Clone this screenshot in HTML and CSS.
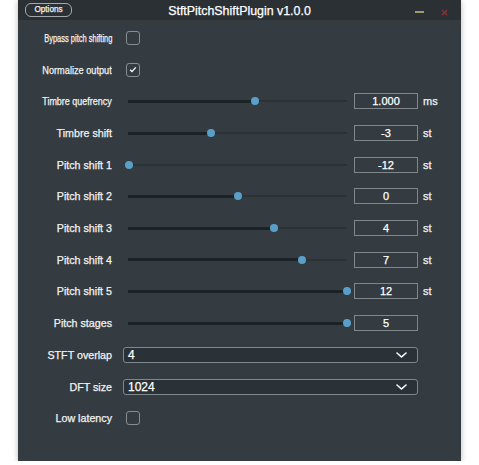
FILE: index.html
```html
<!DOCTYPE html>
<html>
<head>
<meta charset="utf-8">
<link rel="stylesheet" href="styles.css">
</head>
<body>
<div class="window">
  <div class="titlebar">
    <div class="tb-left"><span class="options">Options</span></div>
    <div class="title">StftPitchShiftPlugin v1.0.0</div>
    <div class="tb-right">
      <svg class="tb-min" width="9" height="4" viewBox="0 0 9 4"><line x1="0" y1="2" x2="9" y2="2" stroke="#9c9c6a" stroke-width="2"/></svg>
      <svg class="tb-close" width="7" height="7" viewBox="0 0 7 7"><path d="M1 1L6 6M6 1L1 6" stroke="#8e2e30" stroke-width="1.6"/></svg>
    </div>
  </div>
  <div class="content">
    <div class="row">
      <div class="label"><span class="fit fit-bypass">Bypass pitch shifting</span></div>
      <span class="checkbox"></span>
    </div>
    <div class="row">
      <div class="label"><span class="fit fit-normalize">Normalize output</span></div>
      <span class="checkbox"><svg width="8" height="7" viewBox="0 0 8 7"><path d="M1.2 3.8L3 5.6L6.8 1.4" fill="none" stroke="#ffffff" stroke-width="1.4"/></svg></span>
    </div>
    <div class="row">
      <div class="label"><span class="fit fit-quef">Timbre quefrency</span></div>
      <div class="slider"><div class="track"><div class="fill" style="width:57.8%"></div><div class="thumb" style="left:57.8%"></div></div></div>
      <div class="valuebox">1.000</div><span class="unit">ms</span>
    </div>
    <div class="row">
      <div class="label"><span class="fit">Timbre shift</span></div>
      <div class="slider"><div class="track"><div class="fill" style="width:37.5%"></div><div class="thumb" style="left:37.5%"></div></div></div>
      <div class="valuebox">-3</div><span class="unit">st</span>
    </div>
    <div class="row">
      <div class="label"><span class="fit">Pitch shift 1</span></div>
      <div class="slider"><div class="track"><div class="fill" style="width:0%"></div><div class="thumb" style="left:0%"></div></div></div>
      <div class="valuebox">-12</div><span class="unit">st</span>
    </div>
    <div class="row">
      <div class="label"><span class="fit">Pitch shift 2</span></div>
      <div class="slider"><div class="track"><div class="fill" style="width:50%"></div><div class="thumb" style="left:50%"></div></div></div>
      <div class="valuebox">0</div><span class="unit">st</span>
    </div>
    <div class="row">
      <div class="label"><span class="fit">Pitch shift 3</span></div>
      <div class="slider"><div class="track"><div class="fill" style="width:66.67%"></div><div class="thumb" style="left:66.67%"></div></div></div>
      <div class="valuebox">4</div><span class="unit">st</span>
    </div>
    <div class="row">
      <div class="label"><span class="fit">Pitch shift 4</span></div>
      <div class="slider"><div class="track"><div class="fill" style="width:79.17%"></div><div class="thumb" style="left:79.17%"></div></div></div>
      <div class="valuebox">7</div><span class="unit">st</span>
    </div>
    <div class="row">
      <div class="label"><span class="fit">Pitch shift 5</span></div>
      <div class="slider"><div class="track"><div class="fill" style="width:100%"></div><div class="thumb" style="left:100%"></div></div></div>
      <div class="valuebox">12</div><span class="unit">st</span>
    </div>
    <div class="row">
      <div class="label"><span class="fit">Pitch stages</span></div>
      <div class="slider"><div class="track"><div class="fill" style="width:100%"></div><div class="thumb" style="left:100%"></div></div></div>
      <div class="valuebox">5</div>
    </div>
    <div class="row">
      <div class="label"><span class="fit">STFT overlap</span></div>
      <div class="combo"><span class="combo-text">4</span>
        <svg class="chevron" width="11" height="6" viewBox="0 0 11 6"><path d="M1 1L5.5 5L10 1" fill="none" stroke="#ffffff" stroke-width="1.6" stroke-linecap="round" stroke-linejoin="round"/></svg>
      </div>
    </div>
    <div class="row">
      <div class="label"><span class="fit">DFT size</span></div>
      <div class="combo"><span class="combo-text">1024</span>
        <svg class="chevron" width="11" height="6" viewBox="0 0 11 6"><path d="M1 1L5.5 5L10 1" fill="none" stroke="#ffffff" stroke-width="1.6" stroke-linecap="round" stroke-linejoin="round"/></svg>
      </div>
    </div>
    <div class="row">
      <div class="label"><span class="fit">Low latency</span></div>
      <span class="checkbox"></span>
    </div>
  </div>
</div>
</body>
</html>
```
FILE: styles.css
```css
html, body {
  margin: 0;
  padding: 0;
  background: #ffffff;
}
body {
  font-family: "Liberation Sans", Arial, sans-serif;
  color: #f2f2f2;
  -webkit-text-stroke: 0.25px currentColor;
}
.window {
  margin-left: 18px;
  width: 443px;
  height: 461px;
  background: #343c41;
  box-shadow: 0 1px 6px rgba(0, 0, 0, 0.28);
  display: flex;
  flex-direction: column;
}
.titlebar {
  height: 20px;
  background: #2a3034;
  display: grid;
  grid-template-columns: 1fr auto 1fr;
  align-items: center;
}
.tb-left {
  padding-left: 7px;
  display: flex;
  align-items: center;
}
.options {
  box-sizing: border-box;
  width: 47px;
  height: 14px;
  border: 1px solid #a3a9ac;
  border-radius: 6px;
  font-size: 8.2px;
  line-height: 12px;
  text-align: center;
  color: #f0f0f0;
}
.title {
  font-size: 12.4px;
  color: #ffffff;
  padding-top: 1px;
}
.tb-right {
  display: flex;
  justify-content: flex-end;
  align-items: center;
  padding-right: 13px;
  gap: 17px;
  padding-top: 4px;
}
.content {
  padding-top: 2.15px;
  display: flex;
  flex-direction: column;
}
.row {
  height: 31.7px;
  display: flex;
  align-items: center;
}
.label {
  width: 94px;
  flex-shrink: 0;
  display: flex;
  justify-content: flex-end;
  white-space: nowrap;
  font-size: 10.7px;
}
.fit {
  flex-shrink: 0;
  display: inline-block;
  transform-origin: right center;
}
.fit-bypass { transform: scaleX(0.70); }
.fit-normalize { transform: scaleX(0.86); }
.fit-quef { transform: scaleX(0.84); }
.checkbox {
  box-sizing: border-box;
  margin-left: 14px;
  width: 14px;
  height: 14px;
  border: 1px solid #868e92;
  border-radius: 3px;
  display: flex;
  align-items: center;
  justify-content: center;
}
.slider {
  margin-left: 13px;
  width: 226px;
  box-sizing: border-box;
  padding: 0 4px;
  display: flex;
  align-items: center;
  height: 100%;
}
.track {
  position: relative;
  flex: 1;
  height: 2px;
  background: #2b3337;
}
.fill {
  position: absolute;
  left: -1px;
  top: -0.5px;
  height: 3px;
  background: #1c2327;
}
.thumb {
  position: absolute;
  top: 50%;
  width: 8px;
  height: 8px;
  margin-left: -4px;
  margin-top: -4px;
  border-radius: 50%;
  background: #5a9fca;
}
.valuebox {
  box-sizing: border-box;
  margin-left: 3px;
  width: 64px;
  height: 16px;
  border: 1px solid #7f878b;
  font-size: 11px;
  line-height: 14px;
  text-align: center;
  color: #ffffff;
}
.unit {
  margin-left: 5px;
  font-size: 11px;
  color: #f2f2f2;
}
.combo {
  box-sizing: border-box;
  margin-left: 11px;
  width: 295px;
  height: 16px;
  border: 1px solid #80888c;
  border-radius: 3px;
  background: #2a3237;
  display: flex;
  align-items: center;
  justify-content: space-between;
  padding: 0 10px 0 4px;
}
.combo-text {
  font-size: 12px;
  color: #ffffff;
}
.chevron {
  display: block;
}
```
